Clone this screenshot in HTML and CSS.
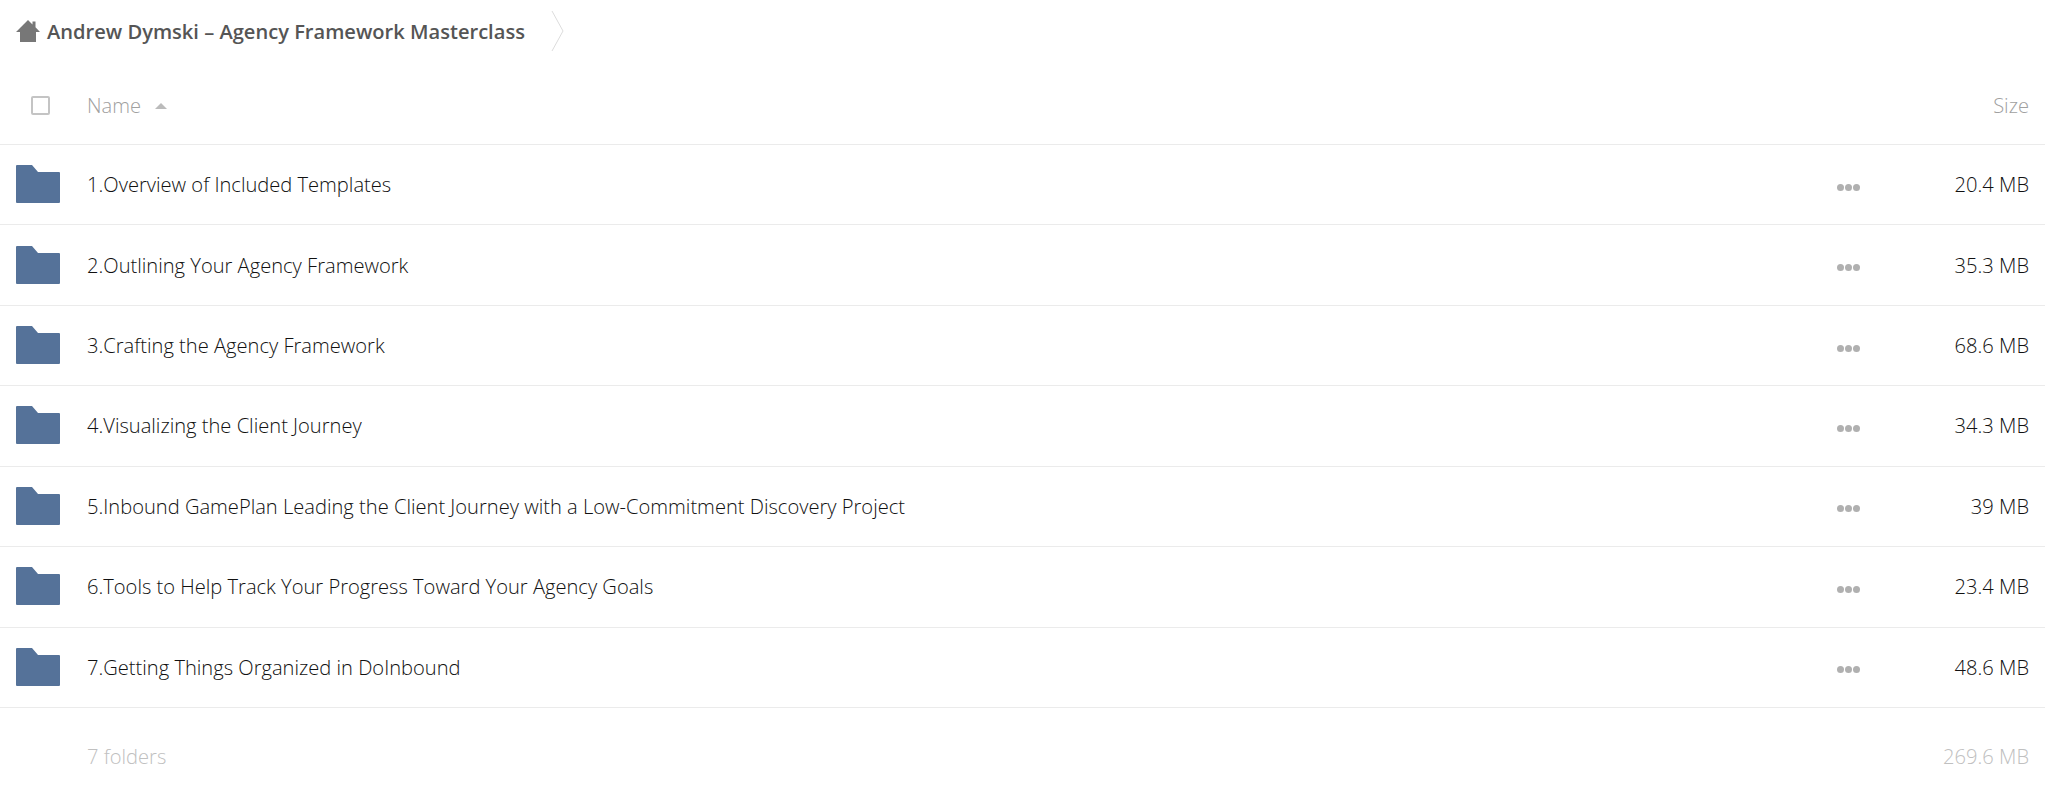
FILE: index.html
```html
<!DOCTYPE html>
<html lang="en">
<head>
<meta charset="utf-8"/>
<title>Andrew Dymski – Agency Framework Masterclass</title>
<link rel="stylesheet" href="styles.css">
</head>
<body>
<div class="breadcrumb">
  <svg class="home-icon" viewBox="0 0 24 22"><path d="M12 0 L16.5 4.4 V1.5 H19.5 V7.3 L24 12 H20 V22 H4 V12 H0 Z" fill="#777"/></svg>
  <span class="crumb-title">Andrew Dymski – Agency Framework Masterclass</span>
  <svg class="crumb-arrow" viewBox="0 0 13 40"><path d="M1 0 L12 20 L1 40" fill="none" stroke="#dcdcdc" stroke-width="1"/></svg>
</div>
<div class="list-head">
  <div class="col-check"><span class="checkbox"></span></div>
  <div class="col-name">Name <span class="sort-arrow"></span></div>
  <div class="col-size">Size</div>
</div>
<div class="file-list">
  <div class="row">
    <div class="col-check"><svg class="folder" viewBox="0 0 44 38"><path d="M1 0 H16 L22 7 H43 Q44 7 44 8 V37 Q44 38 43 38 H1 Q0 38 0 37 V1 Q0 0 1 0 Z"/></svg></div>
    <div class="col-name">1.Overview of Included Templates</div>
    <div class="col-more"><i></i><i></i><i></i></div>
    <div class="col-size">20.4 MB</div>
  </div>
  <div class="row">
    <div class="col-check"><svg class="folder" viewBox="0 0 44 38"><path d="M1 0 H16 L22 7 H43 Q44 7 44 8 V37 Q44 38 43 38 H1 Q0 38 0 37 V1 Q0 0 1 0 Z"/></svg></div>
    <div class="col-name">2.Outlining Your Agency Framework</div>
    <div class="col-more"><i></i><i></i><i></i></div>
    <div class="col-size">35.3 MB</div>
  </div>
  <div class="row">
    <div class="col-check"><svg class="folder" viewBox="0 0 44 38"><path d="M1 0 H16 L22 7 H43 Q44 7 44 8 V37 Q44 38 43 38 H1 Q0 38 0 37 V1 Q0 0 1 0 Z"/></svg></div>
    <div class="col-name">3.Crafting the Agency Framework</div>
    <div class="col-more"><i></i><i></i><i></i></div>
    <div class="col-size">68.6 MB</div>
  </div>
  <div class="row">
    <div class="col-check"><svg class="folder" viewBox="0 0 44 38"><path d="M1 0 H16 L22 7 H43 Q44 7 44 8 V37 Q44 38 43 38 H1 Q0 38 0 37 V1 Q0 0 1 0 Z"/></svg></div>
    <div class="col-name">4.Visualizing the Client Journey</div>
    <div class="col-more"><i></i><i></i><i></i></div>
    <div class="col-size">34.3 MB</div>
  </div>
  <div class="row">
    <div class="col-check"><svg class="folder" viewBox="0 0 44 38"><path d="M1 0 H16 L22 7 H43 Q44 7 44 8 V37 Q44 38 43 38 H1 Q0 38 0 37 V1 Q0 0 1 0 Z"/></svg></div>
    <div class="col-name">5.Inbound GamePlan Leading the Client Journey with a Low-Commitment Discovery Project</div>
    <div class="col-more"><i></i><i></i><i></i></div>
    <div class="col-size">39 MB</div>
  </div>
  <div class="row">
    <div class="col-check"><svg class="folder" viewBox="0 0 44 38"><path d="M1 0 H16 L22 7 H43 Q44 7 44 8 V37 Q44 38 43 38 H1 Q0 38 0 37 V1 Q0 0 1 0 Z"/></svg></div>
    <div class="col-name">6.Tools to Help Track Your Progress Toward Your Agency Goals</div>
    <div class="col-more"><i></i><i></i><i></i></div>
    <div class="col-size">23.4 MB</div>
  </div>
  <div class="row">
    <div class="col-check"><svg class="folder" viewBox="0 0 44 38"><path d="M1 0 H16 L22 7 H43 Q44 7 44 8 V37 Q44 38 43 38 H1 Q0 38 0 37 V1 Q0 0 1 0 Z"/></svg></div>
    <div class="col-name">7.Getting Things Organized in DoInbound</div>
    <div class="col-more"><i></i><i></i><i></i></div>
    <div class="col-size">48.6 MB</div>
  </div>
</div>
<div class="list-foot">
  <div class="col-check"></div>
  <div class="col-name">7 folders</div>
  <div class="col-size">269.6 MB</div>
</div>
</body>
</html>
```

FILE: styles.css
```css
html, body {
    height: 100%;
    overflow: hidden;
}

body {
    margin: 0;
    font-family: "Open Sans", sans-serif;
    font-weight: 300;
    font-size: 20.13px;
    color: #111;
    background: #fff;
}

.breadcrumb {
    display: flex;
    align-items: center;
    height: 62px;
    padding: 0 0 2px 16px;
}

.home-icon {
    width: 24px;
    height: 22px;
    margin-right: 7px;
}

.crumb-title {
    font-weight: 600;
    font-size: 20.1px;
    color: #555;
}

.crumb-arrow {
    width: 13px;
    height: 40px;
    margin-left: 26px;
}

.list-head {
    display: flex;
    align-items: center;
    height: 78px;
    padding-top: 2px;
    border-bottom: 1px solid #ebebeb;
    color: #a0a0a0;
}

.col-check {
    width: 87px;
    flex-shrink: 0;
    padding-left: 16px;
    box-sizing: border-box;
    display: flex;
    align-items: center;
}

.col-name {
    flex: 1;
    display: flex;
    align-items: center;
}

.col-size {
    width: 185px;
    padding-right: 16px;
    box-sizing: border-box;
    text-align: right;
}

.checkbox {
    width: 15px;
    height: 15px;
    border: 2px solid #c4c4c4;
    border-radius: 2px;
    margin-left: 15px;
}

.sort-arrow {
    width: 0;
    height: 0;
    margin-left: 14px;
    margin-top: 2px;
    border-left: 6px solid transparent;
    border-right: 6px solid transparent;
    border-bottom: 6px solid #bbb;
}

.row {
    display: flex;
    align-items: center;
    height: 79.43px;
    border-bottom: 1px solid #ebebeb;
}

.row .col-name,
.row .col-size {
    padding-bottom: 1px;
}

.folder {
    width: 44px;
    height: 38px;
    margin-bottom: 1px;
    fill: #557299;
}

.col-more {
    display: flex;
    gap: 1px;
    margin-top: 5px;
}

.col-more i {
    width: 7px;
    height: 7px;
    border-radius: 50%;
    background: #b0b0b0;
}

.list-foot {
    display: flex;
    align-items: center;
    height: 96px;
    color: #c0c0c0;
}
```
